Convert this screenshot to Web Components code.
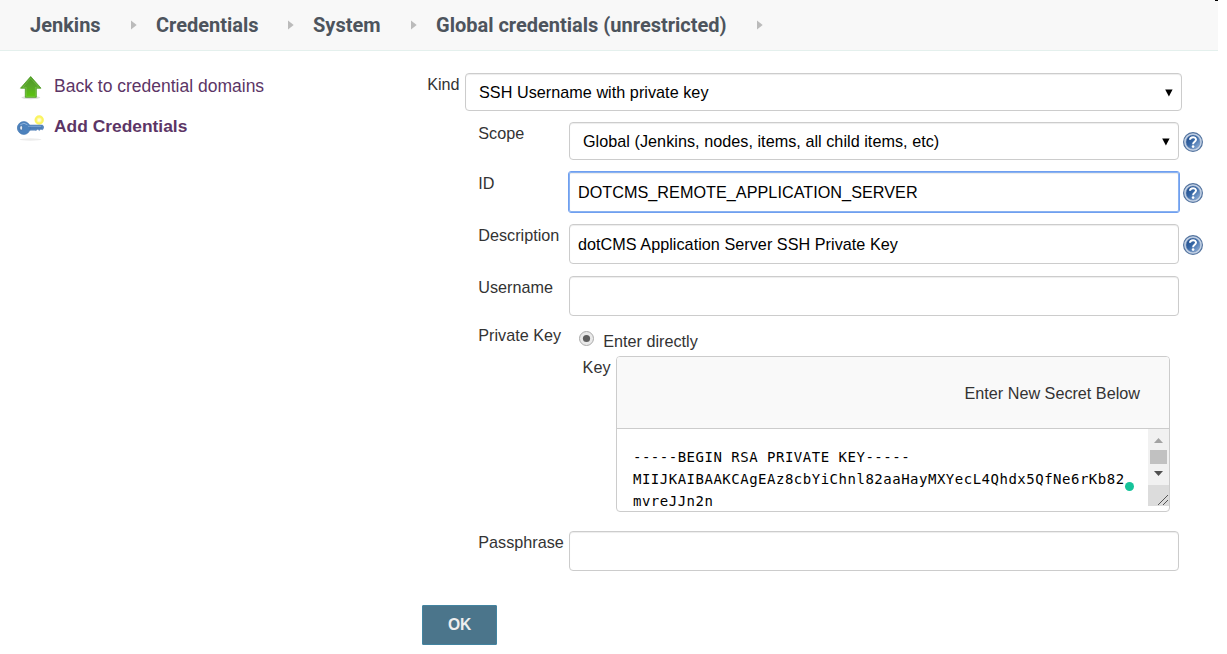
<!DOCTYPE html>
<html lang="en">
<head>
<meta charset="utf-8">
<title>Global credentials [Jenkins]</title>
<style>
body{margin:0;background:#fff;color:#333;font:16.2px/20px "Liberation Sans",Arial,sans-serif}
</style>
</head>
<body>
<jenkins-page>
  <bread-crumbs slot="top">
    <bread-crumb style="--w:101px">Jenkins</bread-crumb>
    <bread-crumb style="--w:132px">Credentials</bread-crumb>
    <bread-crumb style="--w:98px">System</bread-crumb>
    <bread-crumb style="--w:321px">Global credentials (unrestricted)</bread-crumb>
  </bread-crumbs>
  <side-task slot="side" icon="up">Back to credential domains</side-task>
  <side-task slot="side" icon="key" active>Add Credentials</side-task>
  <form-row top label="Kind"><form-field select>SSH Username with private key</form-field></form-row>
  <form-row help label="Scope"><form-field select>Global (Jenkins, nodes, items, all child items, etc)</form-field></form-row>
  <form-row help label="ID"><form-field focused>DOTCMS_REMOTE_APPLICATION_SERVER</form-field></form-row>
  <form-row help label="Description"><form-field>dotCMS Application Server SSH Private Key</form-field></form-row>
  <form-row label="Username"><form-field></form-field></form-row>
  <form-row style="margin-top:-4px" label="Private Key">
    <key-entry>
      <radio-option slot="option">Enter directly</radio-option>
      <secret-box heading="Enter New Secret Below"><div>-----BEGIN RSA PRIVATE KEY-----</div><div>MIIJKAIBAAKCAgEAz8cbYiChnl82aaHayMXYecL4Qhdx5QfNe6rKb82</div><div>mvreJJn2n</div></secret-box>
    </key-entry>
  </form-row>
  <form-row style="margin-top:7px" label="Passphrase"><form-field></form-field></form-row>
  <submit-button>OK</submit-button>
</jenkins-page>
<script>
const define = (name, html) => customElements.define(name, class extends HTMLElement {
  constructor() {
    super();
    this.attachShadow({mode: 'open'});
  }
  connectedCallback() {
    this.shadowRoot.innerHTML = typeof html === 'function' ? html(this) : html;
  }
});

define('jenkins-page', `<style>
:host{display:block;width:1227px;height:654px;overflow:hidden;position:relative}
.cols{display:grid;grid-template-columns:422px 1fr}
nav{padding:21px 0 0 16px;display:flex;flex-direction:column;gap:10px}
main{padding-top:22px;display:flex;flex-direction:column;gap:12px;align-items:flex-start}
.mark{position:absolute;left:1215px;top:0;width:3px;height:1px;background:#000}
</style><slot name="top"></slot><i class="mark"></i>
<div class="cols"><nav><slot name="side"></slot></nav><main><slot></slot></main></div>`);

define('bread-crumbs', `<style>
:host{display:flex;align-items:center;gap:25px;box-sizing:border-box;width:1218px;height:51px;padding:0 0 0 30px;background:#f8f8f8;border-bottom:1px solid #e4f0ed}
</style><slot></slot>`);

define('bread-crumb', `<style>
:host{display:flex;align-items:center;width:var(--w);height:50px;font:bold 20px/50px Roboto,sans-serif;color:#4d545d;white-space:nowrap}
span{flex:1;min-width:0}
svg{flex:none;margin-right:-6px;display:block}
</style><span><slot></slot></span><svg width="6" height="10" viewBox="0 0 6 10"><path d="M0 .5 5.7 5 0 9.5z" fill="#bbb"/></svg>`);

const icons = {
  up: `<svg width="28" height="30" viewBox="0 0 28 30"><defs><linearGradient id="g" x2="0" y2="1"><stop offset="0" stop-color="#4b9a20"/><stop offset=".45" stop-color="#58a52a"/><stop offset="1" stop-color="#5cc70c"/></linearGradient></defs><ellipse cx="14.8" cy="25.6" rx="9.5" ry="1.6" fill="#ddd"/><path d="M14.7 4.5 25 16.2H20.3V25.3H9.3V16.2H4.5z" fill="url(#g)" stroke="#4d9b22" stroke-width=".8"/><path d="M14.7 6.3 22.8 15.3H19.4V24.4H10.2V15.3H6.8z" fill="none" stroke="#8fce64" stroke-width=".6" opacity=".7"/></svg>`,
  key: `<svg width="28" height="30" viewBox="0 0 28 30"><ellipse cx="14.5" cy="27.5" rx="11" ry="1.2" fill="#ececec"/><circle cx="23.2" cy="8" r="3.6" fill="#fff9a0" stroke="#fbf462" stroke-width="2.2"/><circle cx="23.2" cy="8" r="1.5" fill="#fffce0"/><path d="M13 13H26.5L28 15.2 26.6 17.8 24.8 17.3 23.3 18.5 21.8 17.3 20 18.4 18.5 18.2 13 18.2z" fill="#5586bf" stroke="#4a79b2" stroke-width=".5"/><circle cx="7.8" cy="16" r="6.4" fill="#4c82bd" stroke="#4477b2" stroke-width=".7"/><path d="M4.3 12.7Q8 9.8 11.5 12.8" stroke="#8fb2dc" fill="none"/><path d="M12 14.3H25" stroke="#86abd6" stroke-width=".8"/><path d="M14 16H26" stroke="#3f6ea8" stroke-width=".7"/><ellipse cx="5.2" cy="15.9" rx="1.5" ry="2.3" fill="#e8eef4" stroke="#315f98" stroke-width=".7"/></svg>`
};
define('side-task', e => `<style>
:host{display:flex;align-items:flex-start;gap:10px;height:30px;font-size:17.5px;line-height:28px;color:#5c3566;white-space:nowrap}
:host([active]){font-weight:bold;font-size:17.4px}
svg{display:block;flex:none}
</style>${icons[e.getAttribute('icon')]}<span><slot></slot></span>`);

const help = `<svg width="20" height="20" viewBox="0 0 20 20"><defs><linearGradient id="h" x2="1" y2="1"><stop offset="0" stop-color="#204a87"/><stop offset=".45" stop-color="#3465a4"/><stop offset="1" stop-color="#9fbce2"/></linearGradient></defs><circle cx="10" cy="10" r="9.4" fill="#c6d4e7" stroke="#54749f" stroke-width="1.2"/><circle cx="10" cy="10" r="7" fill="url(#h)" stroke="#6484b0" stroke-width=".5"/><path d="M7 7.7C7.1 4.3 13 4.3 13 7.6 13 9.9 10.1 9.7 10.1 12.3" fill="none" stroke="#fff" stroke-width="2"/><circle cx="10.1" cy="14.6" r="1.3" fill="#fff"/></svg>`;
define('form-row', e => `<style>
:host{display:flex;align-items:flex-start;margin-left:56.3px;white-space:nowrap}
:host([top]){margin-left:5.2px;margin-bottom:-1px}
label{display:block;width:90.7px;margin-top:1px;flex:none}
:host([top]) label{width:37.8px}
.body{width:610px}
:host([top]) .body{width:717px}
.help{align-self:center;margin:1px 0 -1px 4px;display:block}
.help svg{display:block}
</style><label>${e.getAttribute('label')}</label><div class="body"><slot></slot></div>${e.hasAttribute('help') ? `<span class="help">${help}</span>` : ''}`);

define('form-field', e => `<style>
:host{display:flex;align-items:center;justify-content:space-between;box-sizing:border-box;height:40px;padding:0 8px;border:1px solid #ccc;border-radius:4px;background:#fff;box-shadow:inset 0 1px 1px rgba(0,0,0,.075);color:#000;letter-spacing:.035px}
:host([select]){height:38px;padding-left:13px}
:host([focused]){border-color:#8ab2f0;outline:1px solid #6f9ff0;outline-offset:0;border-radius:2px}
svg{margin:1px -.5px 0 0}
</style><span><slot></slot></span>${e.hasAttribute('select') ? '<svg width="8" height="8" viewBox="0 0 8 8"><path d="M.2.5H7.6L3.9 7.6z"/></svg>' : ''}`);

define('key-entry', `<style>
:host{display:block;padding-top:7px}
.key{display:flex;margin:5px 0 0 13.6px}
label{width:33.4px;flex:none;margin-top:1px}
</style><slot name="option"></slot><div class="key"><label>Key</label><slot></slot></div>`);

define('radio-option', `<style>
:host{display:flex;align-items:flex-start;height:20px;margin-left:10px;gap:9.3px}
svg{display:block}
</style><svg width="15" height="15" viewBox="0 0 15 15"><circle cx="7.5" cy="7.5" r="7" fill="#e9e9e9" stroke="#aaa"/><circle cx="7.5" cy="7.5" r="3.6" fill="#5e5e5e"/></svg><span><slot></slot></span>`);

define('secret-box', e => `<style>
:host{display:block;box-sizing:border-box;position:relative;width:554px;height:156px;border:1px solid #ccc;border-radius:4px;overflow:hidden;background:#fff}
header{box-sizing:border-box;height:72px;padding:26px 29px 0 0;text-align:right;background:#f9f9f9;border-bottom:1px solid #ccc}
.area{display:flex;justify-content:space-between;height:83px}
.text{padding:17px 0 0 16px;font:14px/22px "DejaVu Sans Mono",monospace;letter-spacing:.51px;color:#000}
.dot{position:absolute;left:508px;top:125px;width:9px;height:9px;border-radius:50%;background:#15c39a}
svg{display:block;flex:none}
</style><header>${e.getAttribute('heading')}</header><div class="area"><div class="text"><slot></slot></div>
<svg width="21" height="77" viewBox="0 0 21 77"><path fill="#f1f1f1" d="M0 0H21V77H0z"/><path fill="#a3a3a3" d="M6 14 10.5 9 15 14z"/><path fill="#c1c1c1" d="M2 21H19V35H2z"/><path fill="#505050" d="M6 42H15L10.5 47z"/><path fill="#dcdcdc" d="M0 56H21V77H0z"/><path d="M10 76 20 66M15 76 20 71" stroke="#555"/></svg></div><i class="dot"></i>`);

define('submit-button', `<style>
:host{display:block;box-sizing:border-box;width:75px;height:40px;margin-top:22px;border:1px solid #4384a0;border-radius:1px;background:#4b758b;color:#eee;font-weight:bold;font-size:15.6px;letter-spacing:-.2px;line-height:38px;text-align:center}
</style><slot></slot>`);
</script>
</body>
</html>
